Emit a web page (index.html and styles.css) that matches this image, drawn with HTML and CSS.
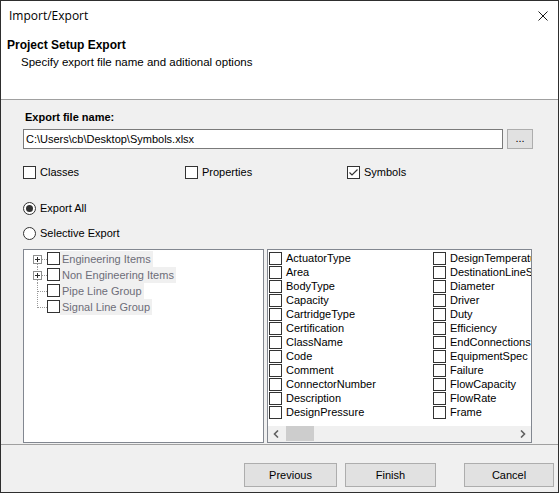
FILE: index.html
```html
<!DOCTYPE html>
<html>
<head>
<meta charset="utf-8">
<link rel="stylesheet" href="styles.css">
</head>
<body>
<div class="window">
  <div class="top">
    <div class="titlebar">
      <span class="title">Import/Export</span>
      <svg class="close" width="10" height="10" viewBox="0 0 10 10"><path d="M0.5 0.5 L9.5 9.5 M9.5 0.5 L0.5 9.5" stroke="#1a1a1a" stroke-width="1" fill="none"/></svg>
    </div>
    <div class="header">
      <div class="h-title">Project Setup Export</div>
      <div class="h-sub">Specify export file name and aditional options</div>
    </div>
  </div>
  <div class="main">
    <div class="label">Export file name:</div>
    <div class="file-row">
      <div class="input">C:\Users\cb\Desktop\Symbols.xlsx</div>
      <div class="browse">...</div>
    </div>
    <div class="opts">
      <div class="chk"><span class="box"></span>Classes</div>
      <div class="chk"><span class="box"></span>Properties</div>
      <div class="chk"><span class="box checked"><svg width="11" height="11" viewBox="0 0 11 11"><path d="M1.5 5.5 L4 8 L9.5 2.5" stroke="#333" stroke-width="1.2" fill="none"/></svg></span>Symbols</div>
    </div>
    <div class="radio first"><span class="dot on"></span>Export All</div>
    <div class="radio second"><span class="dot"></span>Selective Export</div>
    <div class="lists">
      <div class="tree">
        <div class="trow">
          <svg class="gut" width="23" height="16" viewBox="0 0 23 16"><rect x="9.5" y="4.5" width="8" height="8" fill="#fff" stroke="#8e8f8f"/><path d="M11 8.5 H16 M13.5 6 V11" stroke="#2c2c2c"/><path d="M18 8.5 H23 M13.5 13 V16" stroke="#9a9a9a" stroke-dasharray="1 1"/></svg>
          <span class="box"></span><span class="ttext">Engineering Items</span>
        </div>
        <div class="trow">
          <svg class="gut" width="23" height="16" viewBox="0 0 23 16"><path d="M13.5 0 V4" stroke="#9a9a9a" stroke-dasharray="1 1"/><rect x="9.5" y="4.5" width="8" height="8" fill="#fff" stroke="#8e8f8f"/><path d="M11 8.5 H16 M13.5 6 V11" stroke="#2c2c2c"/><path d="M18 8.5 H23 M13.5 13 V16" stroke="#9a9a9a" stroke-dasharray="1 1"/></svg>
          <span class="box"></span><span class="ttext">Non Engineering Items</span>
        </div>
        <div class="trow">
          <svg class="gut" width="23" height="16" viewBox="0 0 23 16"><path d="M13.5 0 V16 M14 8.5 H23" stroke="#9a9a9a" stroke-dasharray="1 1"/></svg>
          <span class="box"></span><span class="ttext">Pipe Line Group</span>
        </div>
        <div class="trow">
          <svg class="gut" width="23" height="16" viewBox="0 0 23 16"><path d="M13.5 0 V9 M14 8.5 H23" stroke="#9a9a9a" stroke-dasharray="1 1"/></svg>
          <span class="box"></span><span class="ttext">Signal Line Group</span>
        </div>
      </div>
      <div class="props">
        <div class="cols">
          <div class="col">
            <div class="item"><span class="box"></span>ActuatorType</div>
            <div class="item"><span class="box"></span>Area</div>
            <div class="item"><span class="box"></span>BodyType</div>
            <div class="item"><span class="box"></span>Capacity</div>
            <div class="item"><span class="box"></span>CartridgeType</div>
            <div class="item"><span class="box"></span>Certification</div>
            <div class="item"><span class="box"></span>ClassName</div>
            <div class="item"><span class="box"></span>Code</div>
            <div class="item"><span class="box"></span>Comment</div>
            <div class="item"><span class="box"></span>ConnectorNumber</div>
            <div class="item"><span class="box"></span>Description</div>
            <div class="item"><span class="box"></span>DesignPressure</div>
          </div>
          <div class="col">
            <div class="item"><span class="box"></span>DesignTemperature</div>
            <div class="item"><span class="box"></span>DestinationLineSegment</div>
            <div class="item"><span class="box"></span>Diameter</div>
            <div class="item"><span class="box"></span>Driver</div>
            <div class="item"><span class="box"></span>Duty</div>
            <div class="item"><span class="box"></span>Efficiency</div>
            <div class="item"><span class="box"></span>EndConnections</div>
            <div class="item"><span class="box"></span>EquipmentSpec</div>
            <div class="item"><span class="box"></span>Failure</div>
            <div class="item"><span class="box"></span>FlowCapacity</div>
            <div class="item"><span class="box"></span>FlowRate</div>
            <div class="item"><span class="box"></span>Frame</div>
          </div>
        </div>
        <div class="hscroll">
          <div class="sbtn"><svg width="7" height="8" viewBox="0 0 7 8"><path d="M5 0.5 L1.5 4 L5 7.5" stroke="#606060" stroke-width="1.6" fill="none"/></svg></div>
          <div class="track"><div class="thumb"></div></div>
          <div class="sbtn"><svg width="7" height="8" viewBox="0 0 7 8"><path d="M2 0.5 L5.5 4 L2 7.5" stroke="#606060" stroke-width="1.6" fill="none"/></svg></div>
        </div>
      </div>
    </div>
  </div>
  <div class="footer">
    <div class="btn prev">Previous</div>
    <div class="btn finish">Finish</div>
    <div class="btn cancel">Cancel</div>
  </div>
</div>
</body>
</html>
```
FILE: styles.css
```css
* { box-sizing: border-box; }
html, body { margin: 0; padding: 0; }
body {
  width: 559px;
  height: 493px;
  font-family: "Liberation Sans", Arial, sans-serif;
  font-size: 11px;
  color: #000;
  background: #f0f0f0;
}
.window {
  width: 559px;
  height: 493px;
  border: 1px solid #2e2e2e;
  display: flex;
  flex-direction: column;
  background: #f0f0f0;
}
.top {
  height: 99px;
  background: #fff;
  border-bottom: 1px solid #a0a0a0;
  flex: none;
}
.titlebar {
  height: 30px;
  display: flex;
  align-items: center;
  justify-content: space-between;
  padding-left: 8px;
  padding-right: 10px;
}
.title {
  font-family: "Open Sans", "Noto Sans", sans-serif;
  font-size: 12px;
  line-height: 30px;
  color: #000;
}
.close { display: block; margin-top: -1px; }
.header { padding: 6px 0 0 6px; }
.h-title {
  font-weight: bold;
  font-size: 12px;
  line-height: 16px;
}
.h-sub {
  font-size: 11.5px;
  line-height: 15px;
  margin-top: 2px;
  padding-left: 14px;
}
.main {
  height: 344px;
  flex: none;
  padding: 10px 0 0 22px;
}
.label {
  font-weight: bold;
  line-height: 14px;
  padding-left: 2px;
}
.file-row {
  display: flex;
  margin-top: 5px;
  height: 20px;
}
.input {
  width: 480px;
  height: 20px;
  background: #fff;
  border: 1px solid #7a7a7a;
  padding-left: 2px;
  line-height: 18px;
}
.browse {
  width: 26px;
  height: 20px;
  margin-left: 4px;
  background: #e1e1e1;
  border: 1px solid #adadad;
  text-align: center;
  line-height: 16px;
  font-size: 11px;
}
.opts {
  display: grid;
  grid-template-columns: 162px 162px 162px;
  margin-top: 17px;
  height: 13px;
}
.chk, .radio {
  display: flex;
  align-items: center;
  height: 13px;
  line-height: 13px;
}
.box {
  width: 13px;
  height: 13px;
  border: 1px solid #333;
  background: #fff;
  flex: none;
  display: inline-flex;
  align-items: center;
  justify-content: center;
}
.chk .box { margin-right: 4px; }
.radio.first { margin-top: 23px; }
.radio.second { margin-top: 12px; }
.dot {
  width: 13px;
  height: 13px;
  border: 1px solid #333;
  border-radius: 50%;
  background: #fff;
  margin-right: 4px;
  flex: none;
  display: inline-flex;
  align-items: center;
  justify-content: center;
}
.dot.on::after {
  content: "";
  width: 7px;
  height: 7px;
  border-radius: 50%;
  background: #333;
}
.lists {
  display: flex;
  margin-top: 9px;
  height: 194px;
}
.tree {
  width: 241px;
  height: 194px;
  background: #fff;
  border: 1px solid #828790;
  padding-top: 1px;
}
.trow {
  display: flex;
  align-items: flex-start;
  height: 16px;
}
.gut { display: block; flex: none; }
.trow .box { margin-top: 1px; }
.ttext {
  background: #f0f0f0;
  color: #6d6d78;
  line-height: 16px;
  height: 16px;
  padding: 0 2px 0 2px;
}
.props {
  width: 265px;
  height: 194px;
  margin-left: 3px;
  background: #fff;
  border: 1px solid #828790;
  display: flex;
  flex-direction: column;
  overflow: hidden;
}
.cols {
  flex: 1;
  display: flex;
  padding: 1px 0 0 1px;
  overflow: hidden;
}
.col {
  width: 164px;
  flex: none;
  white-space: nowrap;
}
.item {
  display: flex;
  align-items: center;
  height: 14px;
  line-height: 14px;
}
.item .box { margin-right: 4px; }
.hscroll {
  height: 17px;
  flex: none;
  background: #f0f0f0;
  border-top: 1px solid #fff;
  display: flex;
}
.sbtn {
  width: 17px;
  flex: none;
  display: flex;
  align-items: center;
  justify-content: center;
}
.track {
  flex: 1;
  padding: 0 0 0 1px;
}
.thumb {
  width: 28px;
  height: 15px;
  background: #cdcdcd;
}
.footer {
  flex: 1;
  border-top: 1px solid #a0a0a0;
  display: flex;
  justify-content: flex-end;
  align-items: flex-start;
  padding: 18px 4px 0 0;
}
.btn {
  height: 24px;
  background: #e1e1e1;
  border: 1px solid #adadad;
  text-align: center;
  line-height: 22px;
}
.prev { width: 93px; }
.finish { width: 91px; margin-left: 8px; }
.cancel { width: 90px; margin-left: 28px; }
```
